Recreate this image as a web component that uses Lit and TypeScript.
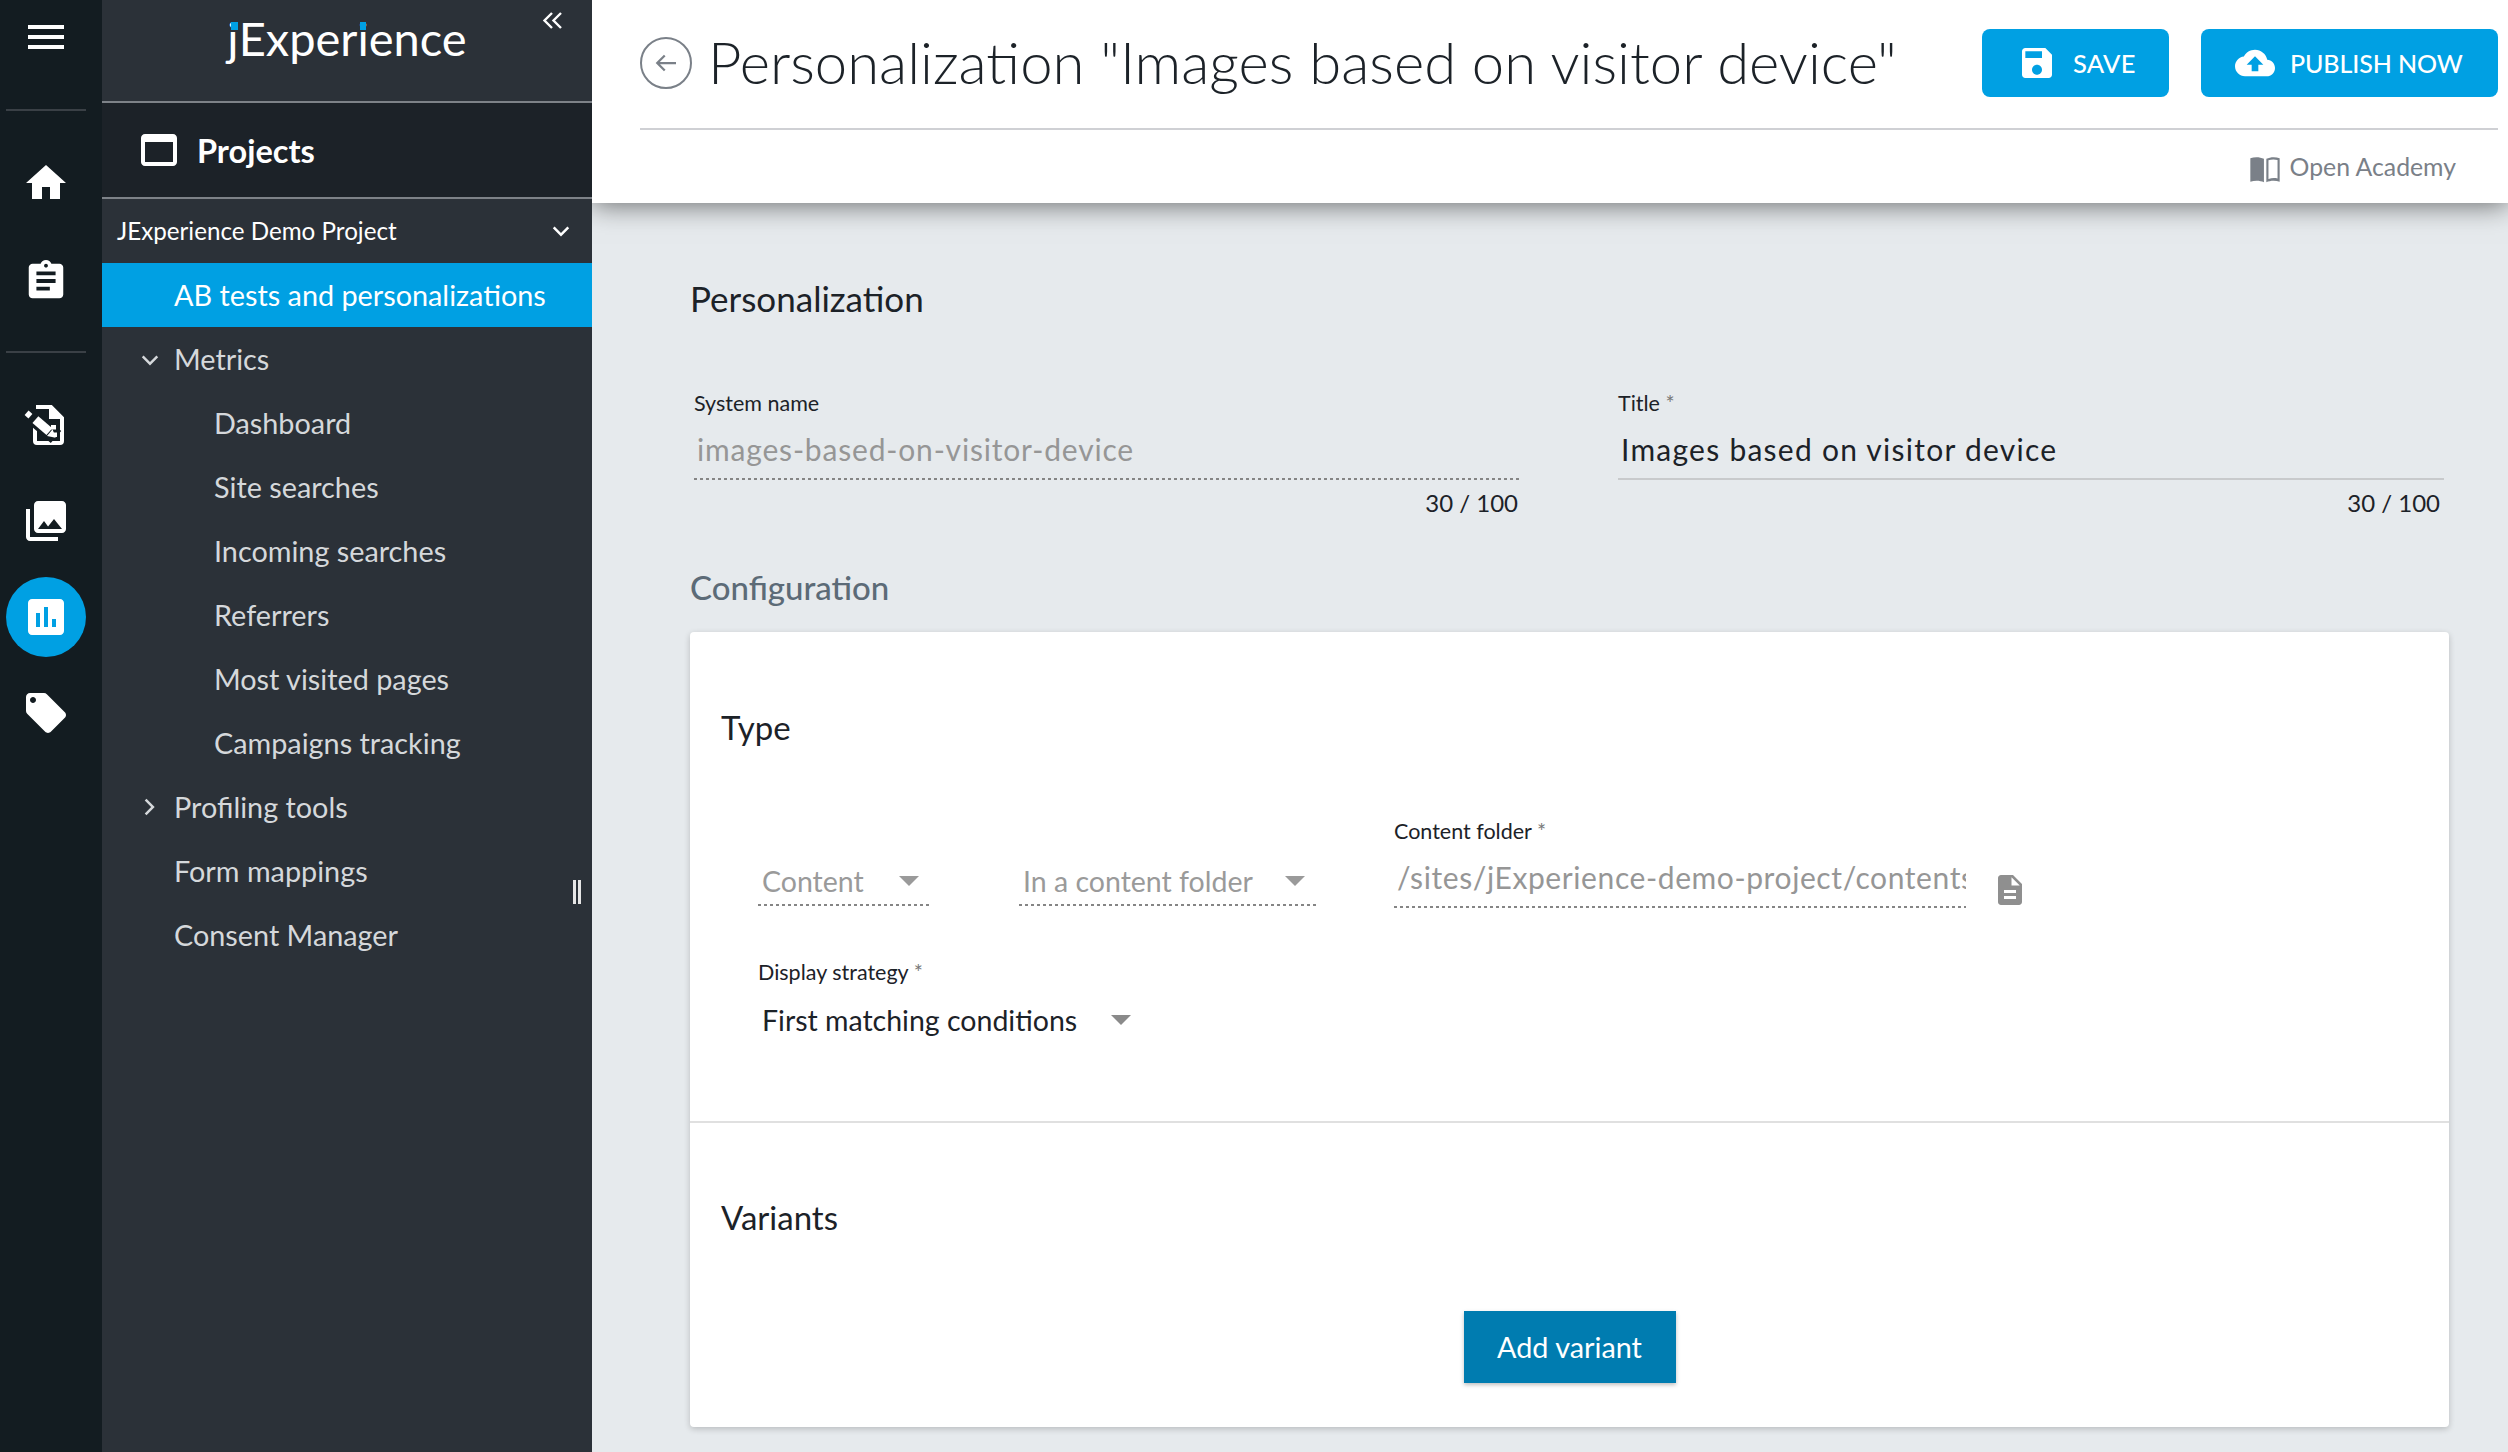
import { LitElement, css, html, svg } from "lit";
import { customElement } from "lit/decorators.js";

const icon = (d: string, size: number, cls = "") => html`
  <svg class=${cls} width=${size} height=${size} viewBox="0 0 24 24" fill="currentColor">${svg`<path fill-rule="evenodd" d=${d}></path>`}</svg>
`;

const ICONS = {
  menu: "M3 18h18v-2H3v2zm0-5h18v-2H3v2zm0-7v2h18V6H3z",
  home: "M10 20v-6h4v6h5v-8h3L12 3 2 12h3v8z",
  clipboard:
    "M19 3h-4.18C14.4 1.84 13.3 1 12 1c-1.3 0-2.4.84-2.82 2H5c-1.1 0-2 .9-2 2v14c0 1.1.9 2 2 2h14c1.1 0 2-.9 2-2V5c0-1.1-.9-2-2-2zm-7 0c.55 0 1 .45 1 1s-.45 1-1 1-1-.45-1-1 .45-1 1-1zm2 14H7v-2h7v2zm3-4H7v-2h10v2zm0-4H7V7h10v2z",
  photos:
    "M22 16V4c0-1.1-.9-2-2-2H8c-1.1 0-2 .9-2 2v12c0 1.1.9 2 2 2h12c1.1 0 2-.9 2-2zm-11-4l2.03 2.71L16 11l4 5H8l3-4zM2 6v14c0 1.1.9 2 2 2h14v-2H4V6H2z",
  chart:
    "M19 3H5c-1.1 0-2 .9-2 2v14c0 1.1.9 2 2 2h14c1.1 0 2-.9 2-2V5c0-1.1-.9-2-2-2zM9 17H7v-7h2v7zm4 0h-2V7h2v10zm4 0h-2v-4h2v4z",
  tag: "M21.41 11.58l-9-9C12.05 2.22 11.55 2 11 2H4c-1.1 0-2 .9-2 2v7c0 .55.22 1.05.59 1.42l9 9c.36.36.86.58 1.41.58.55 0 1.05-.22 1.41-.59l7-7c.37-.36.59-.86.59-1.41 0-.55-.23-1.06-.59-1.42zM5.5 7C4.67 7 4 6.33 4 5.5S4.67 4 5.5 4 7 4.67 7 5.5 6.33 7 5.5 7z",
  window: "M19 4H5c-1.11 0-2 .9-2 2v12c0 1.1.89 2 2 2h14c1.1 0 2-.9 2-2V6c0-1.1-.89-2-2-2zm0 14H5V8h14v10z",
  save: "M17 3H5c-1.11 0-2 .9-2 2v14c0 1.1.89 2 2 2h14c1.1 0 2-.9 2-2V7l-4-4zm-5 16c-1.66 0-3-1.34-3-3s1.34-3 3-3 3 1.34 3 3-1.34 3-3 3zm3-10H5V5h10v4z",
  upload:
    "M19.35 10.04C18.67 6.59 15.64 4 12 4 9.11 4 6.6 5.64 5.35 8.04 2.34 8.36 0 10.91 0 14c0 3.31 2.69 6 6 6h13c2.76 0 5-2.24 5-5 0-2.64-2.05-4.78-4.65-4.96zM14 13v4h-4v-4H7l5-5 5 5h-3z",
  file: "M14 2H6c-1.1 0-1.99.9-1.99 2L4 20c0 1.1.89 2 1.99 2H18c1.1 0 2-.9 2-2V8l-6-6zm2 16H8v-2h8v2zm0-4H8v-2h8v2zm-3-5V3.5L18.5 9H13z",
  down: "M6.5 9 12 14.5 17.5 9 19 10.5l-7 7-7-7z",
  right: "M9 5l7 7-7 7-1.5-1.5L13 12 7.5 6.5z",
  book: "M1 4c3-1.2 7-1.2 10.2.4V22c-3-1.5-7-1.5-10.2-.4zM13 4.4C16.2 2.8 20 2.8 23 4v17.6c-3-1.1-7-1.1-10 .4zm1.6 1V19.500c2.200-.8 4.700-.9 6.800-.4V5.200c-2.300-.6-4.800-.5-6.800.2z",
};

const editDocIcon = html`
  <svg width="48" height="48" viewBox="0 0 24 24">
    <path d="M7 3h7.500L20 8.500V20a1 1 0 0 1-1 1H7.500a1 1 0 0 1-1-1v-8" fill="none" stroke="#fff" stroke-width="2"></path>
    <path d="M14 3v5.500h6" fill="#fff" stroke="#fff" stroke-width="1"></path>
    <path d="M3 6l14 12" stroke="#131c21" stroke-width="8"></path>
    <path d="M6.700 9.300l7 6" stroke="#fff" stroke-width="4.500"></path>
    <path d="M12.500 17.500l2.800-3.400 1.500 4.300z" fill="#fff"></path>
    <path d="M2.300 5.900l1.900 1.700" stroke="#fff" stroke-width="3"></path>
    <path d="M14.500 12H17v2.300h-2.500zM15.200 15.800H17.500V18h-2.300z" fill="#fff"></path>
  </svg>
`;

type NavItem = { label: string; level: 1 | 2; active?: boolean; chevron?: "down" | "right" };

const NAV: NavItem[] = [
  { label: "AB tests and personalizations", level: 1, active: true },
  { label: "Metrics", level: 1, chevron: "down" },
  { label: "Dashboard", level: 2 },
  { label: "Site searches", level: 2 },
  { label: "Incoming searches", level: 2 },
  { label: "Referrers", level: 2 },
  { label: "Most visited pages", level: 2 },
  { label: "Campaigns tracking", level: 2 },
  { label: "Profiling tools", level: 1, chevron: "right" },
  { label: "Form mappings", level: 1 },
  { label: "Consent Manager", level: 1 },
];

@customElement("app-root")
export class AppRoot extends LitElement {
  static styles = css`
    :host {
      display: flex;
      height: 100vh;
      overflow: hidden;
      font-family: "Lato", "Open Sans", sans-serif;
      color: #1c2228;
      background: #e6eaed;
    }
    svg {
      display: block;
      flex: none;
    }

    .rail {
      width: 102px;
      flex: none;
      box-sizing: border-box;
      padding-right: 10px;
      background: #131c21;
      color: #fff;
      display: flex;
      flex-direction: column;
      align-items: center;
    }
    .rail-btn {
      width: 80px;
      height: 80px;
      flex: none;
      border-radius: 50%;
      display: flex;
      align-items: center;
      justify-content: center;
      margin-top: 16px;
    }
    .rail-btn.on {
      background: #00a0e3;
    }
    .rail-btn.first {
      margin-top: 32px;
    }
    .rail-btn.second {
      margin-top: 18px;
    }
    .rail-btn.after-rule {
      margin-top: 32px;
    }
    .rail-menu {
      height: 74px;
      display: flex;
      align-items: center;
    }
    .rail-rule {
      width: 80px;
      height: 2px;
      flex: none;
      background: #3a4046;
      margin-top: 30px;
    }
    .rail-rule.top {
      margin-top: 35px;
    }

    .nav {
      width: 490px;
      flex: none;
      background: #2b3138;
      color: #d5d8db;
      position: relative;
      z-index: 2;
      font-size: 28.800px;
    }
    .brand {
      height: 101px;
      display: flex;
      justify-content: center;
      border-bottom: 2px solid #7d8288;
    }
    .logo {
      font-size: 47px;
      font-weight: 400;
      color: #fff;
      line-height: 76px;
    }
    .logo b {
      font-weight: 400;
      position: relative;
    }
    .logo b::after {
      content: "";
      position: absolute;
      width: 6px;
      height: 8px;
      background: #00a0e3;
      left: 3px;
      top: 12px;
    }
    .logo b.j::after {
      left: 4px;
      width: 7px;
    }
    .collapse {
      position: absolute;
      left: 439px;
      top: 9px;
      color: #fff;
    }
    .projects {
      height: 94px;
      background: #1c2228;
      border-bottom: 2px solid #7d8288;
      display: flex;
      align-items: center;
      gap: 14px;
      padding-left: 33px;
      font-size: 32.500px;
      font-weight: 700;
      color: #fff;
    }
    .project {
      height: 64px;
      box-sizing: border-box;
      padding: 0 17px 2px 15px;
      display: flex;
      align-items: center;
      justify-content: space-between;
      color: #fff;
      font-size: 24.200px;
    }
    .row {
      height: 64px;
      box-sizing: border-box;
      display: flex;
      align-items: center;
      position: relative;
      padding: 0 0 1px 72px;
    }
    .row.sub {
      padding-left: 112px;
    }
    .row.on {
      background: #00a0e3;
      color: #fff;
    }
    .row svg {
      position: absolute;
      left: 34px;
    }
    .grip {
      position: absolute;
      left: 471px;
      top: 880px;
      width: 2px;
      height: 24px;
      border-left: 3px solid #e6e6e6;
      border-right: 3px solid #e6e6e6;
    }

    .main {
      flex: 1;
      min-width: 0;
      display: flex;
      flex-direction: column;
    }
    .head {
      height: 203px;
      flex: none;
      box-sizing: border-box;
      background: #fff;
      padding: 0 10px 0 48px;
      box-shadow: 0 2px 26px rgba(0, 0, 0, 0.55);
      position: relative;
      z-index: 1;
    }
    .head-top {
      height: 130px;
      box-sizing: border-box;
      border-bottom: 2px solid #cfd0d4;
      display: flex;
      align-items: center;
      padding-bottom: 2px;
    }
    .back {
      width: 52px;
      height: 52px;
      flex: none;
      box-sizing: border-box;
      border: 2px solid #7a8088;
      border-radius: 50%;
      color: #7a8088;
      display: flex;
      align-items: center;
      justify-content: center;
      margin-right: 16px;
    }
    h1 {
      flex: 1;
      margin: 0 0 3px;
      font-size: 58px;
      font-weight: 300;
      white-space: nowrap;
      color: #1c2228;
    }
    .btn {
      height: 68px;
      box-sizing: border-box;
      background: #00a0e3;
      color: #fff;
      border-radius: 8px;
      display: flex;
      align-items: center;
      font-size: 25.500px;
      font-weight: 500;
      letter-spacing: 0.3px;
    }
    .btn.save {
      width: 187px;
      padding-left: 35px;
      gap: 16px;
      margin-right: 32px;
    }
    .btn.publish {
      width: 297px;
      padding-left: 34px;
      gap: 15px;
      letter-spacing: -0.1px;
      font-size: 25px;
    }
    .academy {
      display: flex;
      justify-content: flex-end;
      align-items: center;
      gap: 9px;
      height: 72px;
      padding: 0 42px 0 0;
      color: #7a8088;
      font-size: 24.800px;
    }
    .academy svg {
      margin-top: 6px;
    }

    .body {
      flex: 1;
      min-height: 0;
      padding: 75px 59px 0 98px;
    }
    h2 {
      margin: 0;
      font-size: 33px;
      font-weight: 400;
      line-height: 40px;
      color: #1c2228;
    }
    h2.page {
      font-size: 35px;
    }
    .names {
      display: grid;
      grid-template-columns: 828px 826px;
      column-gap: 96px;
      margin: 71px 0 0 4px;
    }
    label {
      display: block;
      font-size: 21.500px;
      line-height: 28px;
      color: #1c2228;
    }
    label i {
      font-style: normal;
      color: #777;
    }
    .value {
      font-size: 30px;
      line-height: 40px;
      padding: 12px 3px 9px;
      letter-spacing: 1.25px;
      white-space: nowrap;
      overflow: hidden;
      color: #1c2228;
      border-bottom: 2px solid #c8cacc;
    }
    .value.off {
      color: #969696;
      letter-spacing: 0.82px;
      border-bottom-color: transparent;
    }
    .value.off,
    .select.off {
      background: linear-gradient(to right, #858585 3px, transparent 3px) left bottom / 6px 2px repeat-x;
      background-origin: border-box;
    }
    .count {
      text-align: right;
      font-size: 24px;
      line-height: 30px;
      margin-top: 8px;
      padding-right: 4px;
    }
    h3 {
      margin: 49px 0 25px;
      font-size: 33px;
      font-weight: 500;
      line-height: 40px;
      color: #5c6b77;
    }
    .card {
      background: #fff;
      border-radius: 4px;
      box-shadow: 0 2px 6px rgba(0, 0, 0, 0.2);
    }
    .type {
      padding: 75px 31px 81px;
      border-bottom: 2px solid #e0e0e0;
    }
    .fields {
      display: flex;
      align-items: flex-end;
      margin: 70px 0 0 37px;
    }
    .select {
      display: flex;
      align-items: center;
      justify-content: space-between;
      box-sizing: border-box;
      font-size: 28.500px;
      line-height: 40px;
      padding: 0 10px 0 4px;
    }
    .select.off {
      color: #9a9a9a;
      height: 52px;
      padding-top: 2px;
      margin-bottom: 2px;
    }
    .select::after {
      content: "";
      border-style: solid;
      border-width: 10px 10px 0;
      border-color: #9a9a9a transparent transparent;
    }
    .select.c1 {
      width: 171px;
      margin-right: 90px;
    }
    .select.c2 {
      width: 299px;
      margin-right: 76px;
      padding-right: 13px;
    }
    .folder {
      width: 572px;
    }
    .folder .value {
      letter-spacing: 0.6px;
    }
    .file {
      color: #8f8f8f;
      margin: 0 -6px 0 26px;
    }
    .strategy {
      margin: 50px 0 0 37px;
    }
    .strategy .select {
      width: 377px;
      margin-top: 14px;
      padding: 0 4px 0 4px;
      color: #1c2228;
    }
    .strategy .select::after {
      border-top-color: #8a8a8a;
    }
    .variants {
      padding: 74px 31px 44px;
    }
    .add {
      width: 212px;
      height: 72px;
      margin: 74px auto 0;
      background: #007cb0;
      color: #fff;
      font-size: 28.800px;
      display: flex;
      align-items: center;
      justify-content: center;
      box-shadow: 0 2px 4px rgba(0, 0, 0, 0.25);
    }
  `;

  renderRail() {
    return html`
      <div class="rail">
        <div class="rail-menu">${icon(ICONS.menu, 48)}</div>
        <div class="rail-rule top"></div>
        <div class="rail-btn first">${icon(ICONS.home, 48)}</div>
        <div class="rail-btn second">${icon(ICONS.clipboard, 46)}</div>
        <div class="rail-rule"></div>
        <div class="rail-btn after-rule">${editDocIcon}</div>
        <div class="rail-btn">${icon(ICONS.photos, 48)}</div>
        <div class="rail-btn on">${icon(ICONS.chart, 48)}</div>
        <div class="rail-btn">${icon(ICONS.tag, 48)}</div>
      </div>
    `;
  }

  renderNav() {
    return html`
      <div class="nav">
        <div class="brand">
          <div class="logo"><b class="j">j</b>Exper<b>i</b>ence</div>
          <svg class="collapse" width="24" height="24" viewBox="0 0 24 24" fill="none" stroke="currentColor" stroke-width="2.400">
            <path d="M11 4 3.500 11.500 11 19M20 4l-7.500 7.500L20 19"></path>
          </svg>
        </div>
        <div class="projects">${icon(ICONS.window, 48)}<span>Projects</span></div>
        <div class="project"><span>JExperience Demo Project</span>${icon(ICONS.down, 28)}</div>
        ${NAV.map(
          (item) => html`
            <div class="row ${item.level === 2 ? "sub" : ""} ${item.active ? "on" : ""}">
              ${item.chevron ? icon(ICONS[item.chevron], 28) : ""}
              <span>${item.label}</span>
            </div>
          `
        )}
        <div class="grip"></div>
      </div>
    `;
  }

  renderHead() {
    return html`
      <div class="head">
        <div class="head-top">
          <div class="back">
            <svg width="30" height="30" viewBox="0 0 24 24" fill="none" stroke="currentColor" stroke-width="1.800">
              <path d="M20 12H5M11 6l-6 6 6 6"></path>
            </svg>
          </div>
          <h1>Personalization "Images based on visitor device"</h1>
          <div class="btn save">${icon(ICONS.save, 40)}<span>SAVE</span></div>
          <div class="btn publish">${icon(ICONS.upload, 40)}<span>PUBLISH NOW</span></div>
        </div>
        <div class="academy">${icon(ICONS.book, 32)}<span>Open Academy</span></div>
      </div>
    `;
  }

  renderBody() {
    return html`
      <div class="body">
        <h2 class="page">Personalization</h2>
        <div class="names">
          <div>
            <label>System name</label>
            <div class="value off">images-based-on-visitor-device</div>
            <div class="count">30 / 100</div>
          </div>
          <div>
            <label>Title <i>*</i></label>
            <div class="value">Images based on visitor device</div>
            <div class="count">30 / 100</div>
          </div>
        </div>
        <h3>Configuration</h3>
        <div class="card">
          <div class="type">
            <h2>Type</h2>
            <div class="fields">
              <div class="select off c1">Content</div>
              <div class="select off c2">In a content folder</div>
              <div class="folder">
                <label>Content folder <i>*</i></label>
                <div class="value off">/sites/jExperience-demo-project/contents</div>
              </div>
              ${icon(ICONS.file, 36, "file")}
            </div>
            <div class="strategy">
              <label>Display strategy <i>*</i></label>
              <div class="select">First matching conditions</div>
            </div>
          </div>
          <div class="variants">
            <h2>Variants</h2>
            <div class="add">Add variant</div>
          </div>
        </div>
      </div>
    `;
  }

  render() {
    return html`
      ${this.renderRail()} ${this.renderNav()}
      <div class="main">${this.renderHead()} ${this.renderBody()}</div>
    `;
  }
}
